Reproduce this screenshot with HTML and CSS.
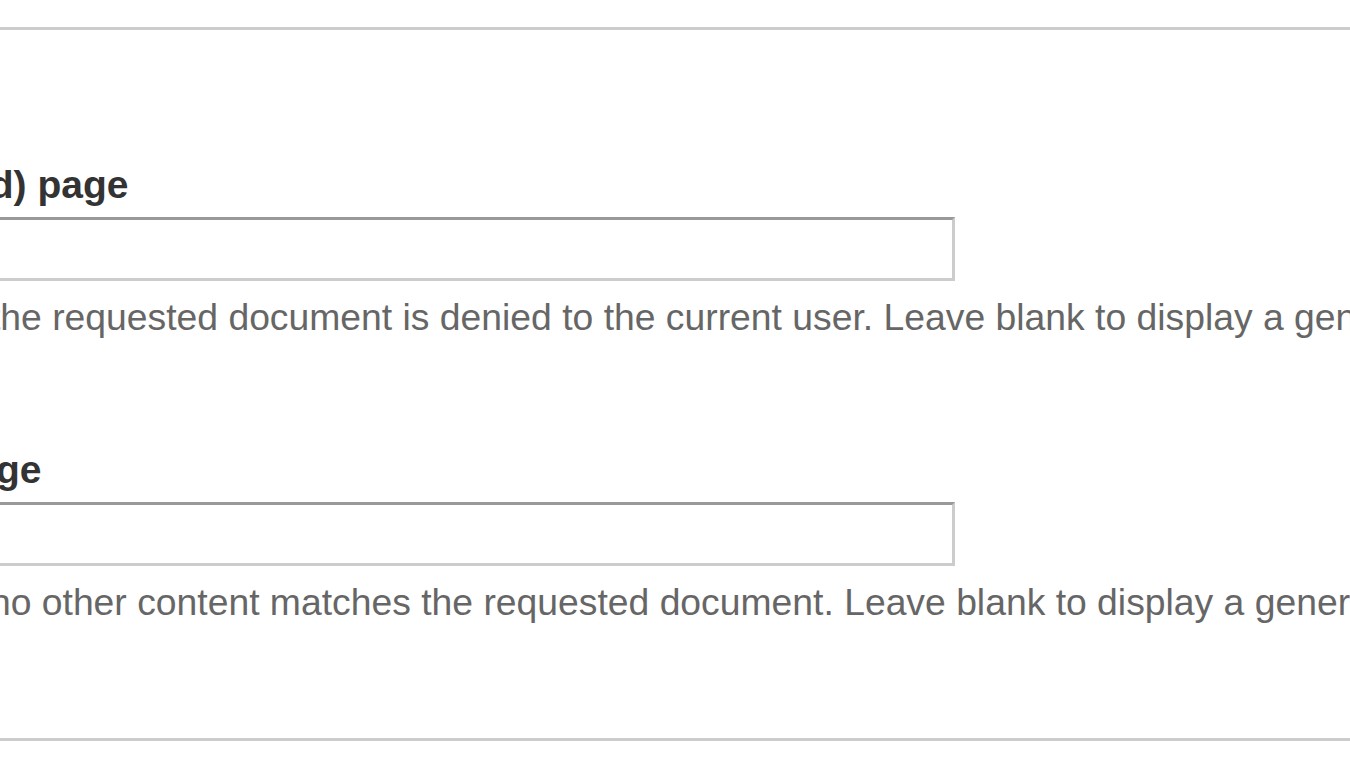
FILE: index.html
```html
<!DOCTYPE html>
<html lang="en">
<head>
    <meta charset="UTF-8">
    <title>Error pages</title>
    <link rel="stylesheet" href="styles.css">
</head>
<body>
    <div class="page">
        <div class="fieldset">
            <div class="form-item">
                <label for="site-403">Default 403 (access denied) page</label>
                <input type="text" id="site-403" class="form-text">
                <div class="description">This page is displayed when the requested document is denied to the current user. Leave blank to display a generic "access denied" page.</div>
            </div>

            <div class="form-item">
                <label for="site-404">Default 404 (not found) page</label>
                <input type="text" id="site-404" class="form-text">
                <div class="description">This page is displayed when no other content matches the requested document. Leave blank to display a generic "page not found" page.</div>
            </div>
        </div>
    </div>
</body>
</html>
```

FILE: styles.css
```css
html, body {
    margin: 0;
    padding: 0;
    background: #fff;
    overflow: hidden;
}

body {
    font-family: "Liberation Sans", Arial, sans-serif;
    color: #333;
}

.page {
    margin-left: -485px;
    width: 2400px;
}

.fieldset {
    margin-top: 27px;
    border-top: 3px solid #ccc;
    border-bottom: 3px solid #ccc;
    padding: 132px 0 115px;
}

.form-item {
    margin-bottom: 109px;
}

.form-item:last-child {
    margin-bottom: 0;
}

label {
    display: block;
    font-size: 39px;
    line-height: 45px;
    font-weight: bold;
    color: #333;
    white-space: nowrap;
}

.form-text {
    display: block;
    box-sizing: border-box;
    width: 1440px;
    height: 64px;
    margin: 10px 0 0;
    padding: 0 6px;
    border: 3px solid #ccc;
    border-top-color: #999;
    border-radius: 0;
    background: #fff;
    font-family: inherit;
    font-size: 36px;
    outline: none;
}

.description {
    margin: 15px 0 0 -4px;
    font-size: 37.3px;
    line-height: 42px;
    color: #666;
    white-space: nowrap;
}
```
